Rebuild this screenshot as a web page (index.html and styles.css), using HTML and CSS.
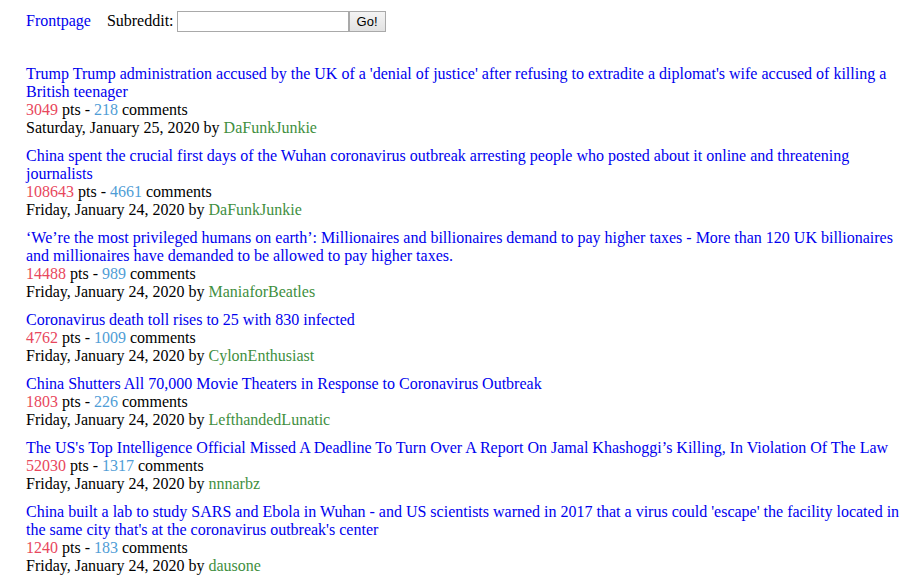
FILE: index.html
```html
<!DOCTYPE html>
<html>
<head>
<meta charset="utf-8">
<link rel="stylesheet" href="styles.css">
</head>
<body>
<div class="page">
  <form class="topbar">
    <a class="front" href="#">Frontpage</a>
    <label class="sub">Subreddit:</label>
    <input class="subinput" type="text">
    <button class="go" type="button">Go!</button>
  </form>
  <div class="posts">
    <div class="post">
      <a class="title" href="#">Trump Trump administration accused by the UK of a 'denial of justice' after refusing to extradite a diplomat's wife accused of killing a British teenager</a>
      <div><span class="pts">3049</span> pts - <span class="cmt">218</span> comments</div>
      <div>Saturday, January 25, 2020 by <span class="author">DaFunkJunkie</span></div>
    </div>
    <div class="post">
      <a class="title" href="#">China spent the crucial first days of the Wuhan coronavirus outbreak arresting people who posted about it online and threatening journalists</a>
      <div><span class="pts">108643</span> pts - <span class="cmt">4661</span> comments</div>
      <div>Friday, January 24, 2020 by <span class="author">DaFunkJunkie</span></div>
    </div>
    <div class="post">
      <a class="title" href="#">‘We’re the most privileged humans on earth’: Millionaires and billionaires demand to pay higher taxes - More than 120 UK billionaires and millionaires have demanded to be allowed to pay higher taxes.</a>
      <div><span class="pts">14488</span> pts - <span class="cmt">989</span> comments</div>
      <div>Friday, January 24, 2020 by <span class="author">ManiaforBeatles</span></div>
    </div>
    <div class="post">
      <a class="title" href="#">Coronavirus death toll rises to 25 with 830 infected</a>
      <div><span class="pts">4762</span> pts - <span class="cmt">1009</span> comments</div>
      <div>Friday, January 24, 2020 by <span class="author">CylonEnthusiast</span></div>
    </div>
    <div class="post">
      <a class="title" href="#">China Shutters All 70,000 Movie Theaters in Response to Coronavirus Outbreak</a>
      <div><span class="pts">1803</span> pts - <span class="cmt">226</span> comments</div>
      <div>Friday, January 24, 2020 by <span class="author">LefthandedLunatic</span></div>
    </div>
    <div class="post">
      <a class="title" href="#">The US's Top Intelligence Official Missed A Deadline To Turn Over A Report On Jamal Khashoggi’s Killing, In Violation Of The Law</a>
      <div><span class="pts">52030</span> pts - <span class="cmt">1317</span> comments</div>
      <div>Friday, January 24, 2020 by <span class="author">nnnarbz</span></div>
    </div>
    <div class="post">
      <a class="title" href="#">China built a lab to study SARS and Ebola in Wuhan - and US scientists warned in 2017 that a virus could 'escape' the facility located in the same city that's at the coronavirus outbreak's center</a>
      <div><span class="pts">1240</span> pts - <span class="cmt">183</span> comments</div>
      <div>Friday, January 24, 2020 by <span class="author">dausone</span></div>
    </div>
  </div>
</div>
</body>
</html>
```
FILE: styles.css
```css
html, body {
  margin: 0;
  padding: 0;
  background: #fff;
}
body {
  font-family: "Liberation Serif", "Times New Roman", serif;
  font-size: 16px;
  line-height: 18px;
  color: #000;
}
.page {
  padding: 11px 12px 0 26px;
}
.topbar {
  display: flex;
  align-items: center;
  margin: 0;
  height: 20px;
}
.front {
  color: #0000ee;
  text-decoration: none;
  margin-right: 16px;
}
.sub {
  margin-right: 3px;
}
.subinput {
  box-sizing: border-box;
  width: 172px;
  height: 21px;
  border: 1px solid #a9a9a9;
  padding: 1px 2px;
  margin: 0;
  font-size: 13px;
}
.go {
  box-sizing: border-box;
  width: 37px;
  height: 21px;
  margin: 0;
  padding: 0;
  border: 1px solid #a9a9a9;
  background: linear-gradient(#f4f4f4, #e2e2e2);
  font-family: "Liberation Sans", Arial, sans-serif;
  font-size: 13px;
  color: #000;
}
.posts {
  margin-top: 34px;
  display: flex;
  flex-direction: column;
  gap: 10px;
}
.title {
  display: block;
  color: #0000ee;
  text-decoration: none;
}
.pts {
  color: #e8475c;
}
.cmt {
  color: #4f9dd6;
}
.author {
  color: #3f8f3f;
}
```
